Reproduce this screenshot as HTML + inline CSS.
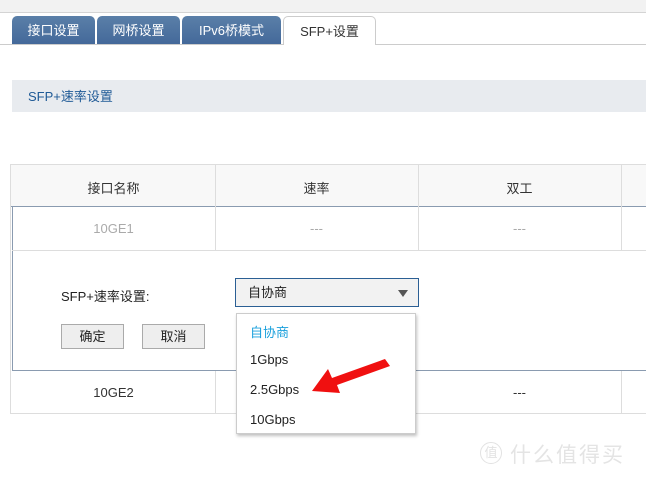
<!DOCTYPE html><html><head><meta charset="utf-8"><style>
body{margin:0;width:646px;height:479px;background:#fff;position:relative;overflow:hidden;font-family:"Liberation Sans","Noto Sans CJK SC",sans-serif;font-size:13px;color:#333}
.a{position:absolute}
.tab{position:absolute;top:16px;height:28px;background:linear-gradient(#5a7fa8,#44699a);color:#fff;border-radius:5px 5px 0 0;text-align:center;line-height:30px;font-size:13px}
.c{position:absolute;text-align:center}
.btn{position:absolute;top:324px;width:61px;height:23px;border:1px solid #aaa;background:#eee;text-align:center;line-height:23px;font-size:13px;color:#222}
</style></head><body>
<div class="a" style="left:0;top:0;width:646px;height:12px;background:#f2f2f2;border-bottom:1px solid #d4d4d4"></div>
<div class="a" style="left:0;top:44px;width:646px;height:1px;background:#ccc"></div>
<div class="tab" style="left:12px;width:83px">接口设置</div>
<div class="tab" style="left:97px;width:83px">网桥设置</div>
<div class="tab" style="left:182px;width:99px">IPv6桥模式</div>
<div class="tab" style="left:283px;width:93px;height:29px;background:#fff;color:#333;border:1px solid #ccc;border-bottom:none;box-sizing:border-box">SFP+设置</div>
<div class="a" style="left:12px;top:80px;width:634px;height:32px;background:#e8ebef;color:#1f5a96;line-height:33px;font-size:13px;text-indent:16px">SFP+速率设置</div>
<div class="a" style="left:10px;top:164px;width:640px;height:43px;background:#f8f8f8;border-top:1px solid #ddd;border-bottom:1px solid #8a9bb0;box-sizing:border-box"></div>
<div class="a" style="left:10px;top:164px;width:1px;height:250px;background:#ddd"></div>
<div class="a" style="left:12px;top:207px;width:1px;height:164px;background:#8a9bb0"></div>
<div class="a" style="left:12px;top:250px;width:634px;height:1px;background:#ddd"></div>
<div class="a" style="left:12px;top:370px;width:634px;height:1px;background:#8a9bb0"></div>
<div class="a" style="left:10px;top:413px;width:636px;height:1px;background:#ddd"></div>
<div class="a" style="left:215px;top:164px;width:1px;height:86px;background:#ddd"></div>
<div class="a" style="left:418px;top:164px;width:1px;height:86px;background:#ddd"></div>
<div class="a" style="left:621px;top:164px;width:1px;height:86px;background:#ddd"></div>
<div class="a" style="left:215px;top:371px;width:1px;height:42px;background:#ddd"></div>
<div class="a" style="left:621px;top:371px;width:1px;height:42px;background:#ddd"></div>
<div class="c" style="left:12px;width:203px;top:178px">接口名称</div>
<div class="c" style="left:215px;width:203px;top:178px">速率</div>
<div class="c" style="left:418px;width:203px;top:178px">双工</div>
<div class="c" style="left:12px;width:203px;top:221px;color:#aaa">10GE1</div>
<div class="c" style="left:215px;width:203px;top:221px;color:#aaa">---</div>
<div class="c" style="left:418px;width:203px;top:221px;color:#aaa">---</div>
<div class="c" style="left:12px;width:203px;top:385px">10GE2</div>
<div class="c" style="left:418px;width:203px;top:385px">---</div>
<div class="a" style="left:61px;top:286px;font-size:13px;color:#222">SFP+速率设置:</div>
<div class="a" style="left:235px;top:278px;width:184px;height:29px;border:1px solid #2b5f94;box-sizing:border-box;background:#f2f2f2;line-height:27px;text-indent:12px;font-size:13px;color:#222">自协商<span class="a" style="right:10px;top:11px;width:0;height:0;border-left:5px solid transparent;border-right:5px solid transparent;border-top:7px solid #555"></span></div>
<div class="btn" style="left:61px">确定</div>
<div class="btn" style="left:142px">取消</div>
<div class="a" style="left:236px;top:313px;width:180px;height:121px;background:#fff;border:1px solid #ccc;box-sizing:border-box;box-shadow:1px 2px 3px rgba(0,0,0,.25);font-size:13px;color:#222">
<div class="a" style="left:13px;top:8px;color:#1aa0dc">自协商</div>
<div class="a" style="left:13px;top:38px">1Gbps</div>
<div class="a" style="left:13px;top:68px">2.5Gbps</div>
<div class="a" style="left:13px;top:98px">10Gbps</div>
</div>
<svg class="a" style="left:300px;top:355px" width="95" height="45"><path d="M85 4 L90 11 L37 30 L40 38 L12 36 L28 14 L32 23 Z" fill="#f01010"/></svg>
<div class="a" style="left:480px;top:442px;width:20px;height:20px;border:1.5px solid #e2e2e2;border-radius:50%;font-size:13px;line-height:20px;text-align:center;color:#e2e2e2">值</div>
<div class="a" style="left:510px;top:439px;font-size:21px;color:#e4e4e4;letter-spacing:2px">什么值得买</div>
</body></html>
